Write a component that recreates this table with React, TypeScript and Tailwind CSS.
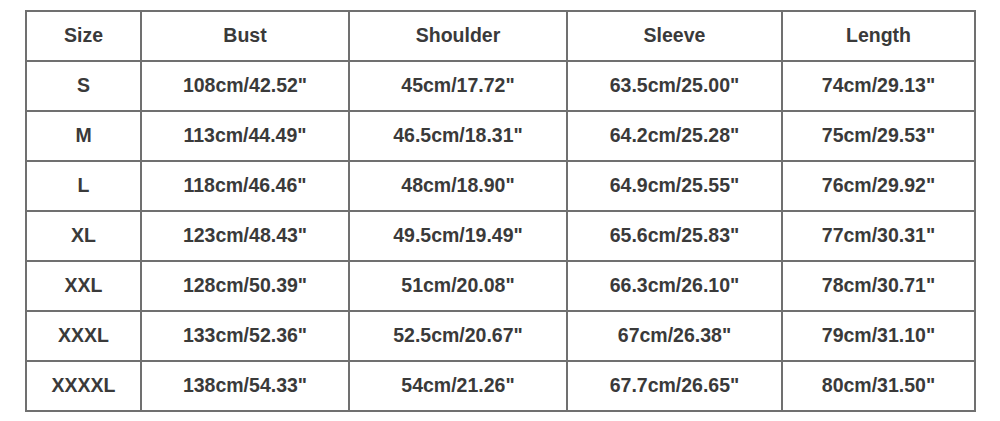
import React from "react";

const headers = ["Size", "Bust", "Shoulder", "Sleeve", "Length"];
const rows = [
  ["S", '108cm/42.52"', '45cm/17.72"', '63.5cm/25.00"', '74cm/29.13"'],
  ["M", '113cm/44.49"', '46.5cm/18.31"', '64.2cm/25.28"', '75cm/29.53"'],
  ["L", '118cm/46.46"', '48cm/18.90"', '64.9cm/25.55"', '76cm/29.92"'],
  ["XL", '123cm/48.43"', '49.5cm/19.49"', '65.6cm/25.83"', '77cm/30.31"'],
  ["XXL", '128cm/50.39"', '51cm/20.08"', '66.3cm/26.10"', '78cm/30.71"'],
  ["XXXL", '133cm/52.36"', '52.5cm/20.67"', '67cm/26.38"', '79cm/31.10"'],
  ["XXXXL", '138cm/54.33"', '54cm/21.26"', '67.7cm/26.65"', '80cm/31.50"'],
];

export default function App() {
  const all = [headers, ...rows];
  return (
    <div
      className="w-[1000px] h-[421px] bg-white pt-[10px] pl-[25px]"
      style={{ fontFamily: '"Liberation Sans", Arial, sans-serif' }}
    >
      <div className="grid grid-cols-[115px_208px_218px_215px_193px] w-[951px] border-t-2 border-l-2 border-[#707070]">
        {all.map((r, i) =>
          r.map((c, j) => (
            <div
              key={i + "-" + j}
              className="h-[50px] flex items-center justify-center border-r-2 border-b-2 border-[#707070] text-[19.5px] font-bold text-[#3a3a3a]"
            >
              {c}
            </div>
          ))
        )}
      </div>
    </div>
  );
}
